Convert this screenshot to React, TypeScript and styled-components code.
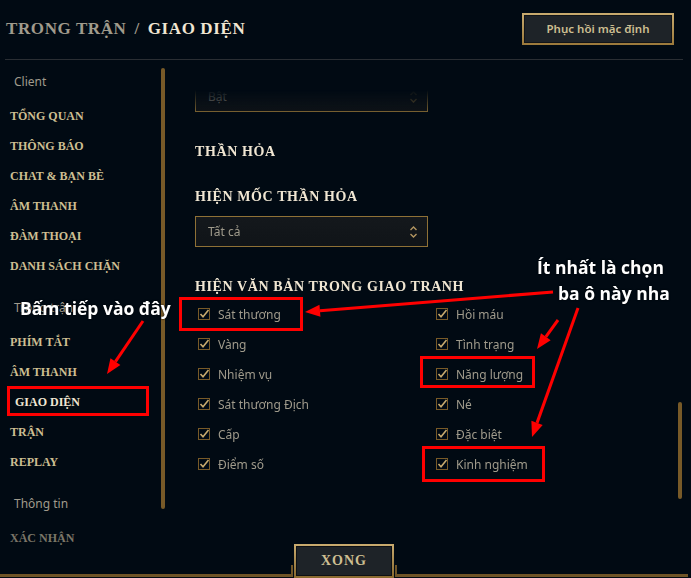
import React from "react";
import styled, { createGlobalStyle } from "styled-components";

const GlobalStyle = createGlobalStyle`
  html, body { margin: 0; padding: 0; background: #010a13; }
  body { font-family: "Noto Sans", sans-serif; }
  * { box-sizing: border-box; }
`;

const Screen = styled.div`
  position: relative;
  width: 691px;
  height: 578px;
  background: #010a13;
  display: flex;
  flex-direction: column;
  overflow: hidden;
`;

const Header = styled.header`
  height: 59px;
  display: flex;
  align-items: center;
  justify-content: space-between;
  padding: 0 17px 2px 6px;
`;

const Title = styled.h1`
  margin: 0;
  font-family: "Liberation Serif", serif;
  font-weight: 700;
  font-size: 17px;
  letter-spacing: 0.6px;
  color: #a09b8c;
  white-space: nowrap;
`;

const TitleSep = styled.span`
  margin: 0 8px;
`;

const TitleCurrent = styled.span`
  color: #f0e6d2;
`;

const ResetButton = styled.button`
  width: 152px;
  height: 32px;
  padding: 0;
  border: 2px solid transparent;
  border-image: linear-gradient(#c8aa6e, #9c7a3c) 1;
  background: #1e2328;
  box-shadow: inset 0 0 0 1px #111418;
  color: #cdbe91;
  font-family: "Noto Sans", sans-serif;
  font-weight: 600;
  font-size: 11.5px;
`;

const Divider = styled.div`
  height: 1px;
  margin: 0 8px 0 5px;
  background: #2a2e33;
`;

const Main = styled.main`
  flex: 1;
  min-height: 0;
  display: flex;
`;

const Sidebar = styled.aside`
  width: 165px;
  display: flex;
  padding-top: 8px;
`;

const Nav = styled.nav`
  width: 161px;
  display: flex;
  flex-direction: column;
  padding-left: 10px;
`;

const GroupLabel = styled.div`
  height: 28px;
  line-height: 28px;
  padding-left: 4px;
  margin-bottom: 5px;
  font-size: 12px;
  color: #a09b8c;
  &:not(:first-child) {
    margin-top: 13px;
  }
`;

const NavItem = styled.div<{ $active?: boolean; $disabled?: boolean }>`
  height: 30px;
  line-height: 30px;
  padding-left: ${(p) => (p.$active ? "5px" : "0")};
  font-family: "Liberation Serif", serif;
  font-weight: 700;
  font-size: 12px;
  letter-spacing: 0;
  white-space: nowrap;
  color: ${(p) => (p.$active ? "#f0e6d2" : p.$disabled ? "#7a7567" : "#cdbe91")};
`;

const ScrollThumb = styled.div<{ $height: number; $offset?: number }>`
  width: 4px;
  height: ${(p) => p.$height}px;
  margin-top: ${(p) => p.$offset ?? 0}px;
  border-radius: 2px;
  background: #785a28;
  flex-shrink: 0;
`;

const Content = styled.section`
  flex: 1;
  display: flex;
  flex-direction: column;
  padding: 21px 0 0 30px;
  -webkit-mask-image: linear-gradient(to bottom, transparent 30px, #000 56px);
  mask-image: linear-gradient(to bottom, transparent 30px, #000 56px);
`;

const RightTrack = styled.div`
  width: 13px;
  display: flex;
  flex-direction: column;
`;

const SectionTitle = styled.h2<{ $top: number; $bottom?: number }>`
  margin: ${(p) => p.$top}px 0 ${(p) => p.$bottom ?? 0}px;
  height: 20px;
  line-height: 20px;
  font-family: "Liberation Serif", serif;
  font-weight: 700;
  font-size: 14px;
  letter-spacing: 0.6px;
  color: #f0e6d2;
  white-space: nowrap;
`;

const Select = styled.div`
  width: 233px;
  height: 31px;
  display: flex;
  align-items: center;
  justify-content: space-between;
  padding: 0 9px 0 12px;
  border: 1px solid #8f7136;
  background: linear-gradient(#14181c, #101418);
  font-size: 12px;
  color: #a09b8c;
`;

const OptionGrid = styled.div`
  display: grid;
  grid-template-columns: 238px 238px;
  grid-template-rows: repeat(6, 30px);
  grid-auto-flow: column;
  padding-left: 2px;
`;

const Option = styled.label`
  display: flex;
  align-items: center;
  gap: 7px;
  font-size: 12px;
  color: #a09b8c;
  white-space: nowrap;
`;

const Footer = styled.footer`
  height: 34px;
  display: flex;
  align-items: flex-end;
  padding-right: 3px;
`;

const FooterRule = styled.div`
  flex: 1;
  height: 3px;
  background: #6f5427;
  margin-bottom: 1px;
`;

const DoneFrame = styled.div`
  position: relative;
  display: flex;
  align-items: flex-end;
  padding: 0 3px;
  &::before,
  &::after {
    content: "";
    position: absolute;
    bottom: 1px;
    width: 2px;
    height: 12px;
    background: #6f5427;
  }
  &::before { left: 0; }
  &::after { right: 0; }
`;

const DoneButton = styled.button`
  width: 100px;
  height: 34px;
  padding: 0;
  border: 2px solid transparent;
  border-image: linear-gradient(#c8aa6e, #8a6a30) 1;
  background: #1e2328;
  box-shadow: inset 0 0 0 1px #0d1014;
  font-family: "Liberation Serif", serif;
  font-weight: 700;
  font-size: 14px;
  letter-spacing: 1px;
  color: #cdbe91;
`;

/* red markup drawn on top of the settings page */
const Markup = styled.div`
  position: absolute;
  inset: 0;
  pointer-events: none;
`;

const MarkupSvg = styled.svg`
  position: absolute;
  left: 0;
  top: 0;
`;

const Note = styled.div<{ $x: number; $y: number }>`
  position: absolute;
  left: ${(p) => p.$x}px;
  top: ${(p) => p.$y}px;
  font-family: "Open Sans", sans-serif;
  font-weight: 700;
  font-size: 17.5px;
  line-height: 22px;
  color: #ffffff;
  white-space: nowrap;
  text-shadow: 0 0 2px rgba(0, 0, 0, 0.9);
`;

const Chevrons = ({ faded }: { faded?: boolean }) => (
  <svg width="9" height="14" viewBox="0 0 9 14">
    <path
      d="M1.5 5 L4.5 2 L7.5 5 M1.5 9 L4.5 12 L7.5 9"
      fill="none"
      stroke={faded ? "#6d5a34" : "#b39660"}
      strokeWidth="1.4"
    />
  </svg>
);

const CheckBox = () => (
  <svg width="14" height="14" viewBox="0 0 14 14" style={{ flexShrink: 0 }}>
    <rect x="1.5" y="1.5" width="11" height="11" fill="none" stroke="#785a28" strokeWidth="1" />
    <path d="M3.5 7 L6 9.8 L11.5 3" fill="none" stroke="#c8aa6e" strokeWidth="1.6" />
  </svg>
);

const Arrow = ({ x1, y1, x2, y2 }: { x1: number; y1: number; x2: number; y2: number }) => {
  const dx = x2 - x1;
  const dy = y2 - y1;
  const len = Math.hypot(dx, dy);
  const ux = dx / len;
  const uy = dy / len;
  const bx = x2 - ux * 15;
  const by = y2 - uy * 15;
  const px = -uy * 6;
  const py = ux * 6;
  return (
    <g>
      <line x1={x1} y1={y1} x2={bx} y2={by} stroke="#ff0000" strokeWidth="3" />
      <polygon points={`${x2},${y2} ${bx + px},${by + py} ${bx - px},${by - py}`} fill="#ff0000" />
    </g>
  );
};

const leftOptions = ["Sát thương", "Vàng", "Nhiệm vụ", "Sát thương Địch", "Cấp", "Điểm số"];
const rightOptions = ["Hồi máu", "Tình trạng", "Năng lượng", "Né", "Đặc biệt", "Kinh nghiệm"];

export default function App() {
  return (
    <Screen>
      <GlobalStyle />
      <Header>
        <Title>
          TRONG TRẬN<TitleSep>/</TitleSep>
          <TitleCurrent>GIAO DIỆN</TitleCurrent>
        </Title>
        <ResetButton>Phục hồi mặc định</ResetButton>
      </Header>
      <Divider />
      <Main>
        <Sidebar>
          <Nav>
            <GroupLabel>Client</GroupLabel>
            <NavItem>TỔNG QUAN</NavItem>
            <NavItem>THÔNG BÁO</NavItem>
            <NavItem>CHAT &amp; BẠN BÈ</NavItem>
            <NavItem>ÂM THANH</NavItem>
            <NavItem>ĐÀM THOẠI</NavItem>
            <NavItem>DANH SÁCH CHẶN</NavItem>
            <GroupLabel>Trong trận</GroupLabel>
            <NavItem>PHÍM TẮT</NavItem>
            <NavItem>ÂM THANH</NavItem>
            <NavItem $active>GIAO DIỆN</NavItem>
            <NavItem>TRẬN</NavItem>
            <NavItem>REPLAY</NavItem>
            <GroupLabel>Thông tin</GroupLabel>
            <NavItem $disabled>XÁC NHẬN</NavItem>
          </Nav>
          <ScrollThumb $height={441} />
        </Sidebar>
        <Content>
          <Select>
            <span>Bật</span>
            <Chevrons faded />
          </Select>
          <SectionTitle $top={30}>THẦN HỎA</SectionTitle>
          <SectionTitle $top={25} $bottom={9}>HIỆN MỐC THẦN HỎA</SectionTitle>
          <Select>
            <span>Tất cả</span>
            <Chevrons />
          </Select>
          <SectionTitle $top={30} $bottom={2}>HIỆN VĂN BẢN TRONG GIAO TRANH</SectionTitle>
          <OptionGrid>
            {[...leftOptions, ...rightOptions].map((label) => (
              <Option key={label}>
                <CheckBox />
                {label}
              </Option>
            ))}
          </OptionGrid>
        </Content>
        <RightTrack>
          <ScrollThumb $height={97} $offset={342} />
        </RightTrack>
      </Main>
      <Footer>
        <FooterRule />
        <DoneFrame>
          <DoneButton>XONG</DoneButton>
        </DoneFrame>
        <FooterRule />
      </Footer>

      <Markup>
        <MarkupSvg width="691" height="578" viewBox="0 0 691 578">
          <g fill="none" stroke="#ff0000" strokeWidth="3">
            <rect x="180.5" y="298.5" width="121" height="31" />
            <rect x="8.5" y="387.5" width="139" height="27" />
            <rect x="421.5" y="357.5" width="112" height="29" />
            <rect x="423.5" y="447.5" width="120" height="33" />
          </g>
          <Arrow x1={553} y1={292} x2={305} y2={312} />
          <Arrow x1={143} y1={321} x2={107} y2={374} />
          <Arrow x1={558} y1={320} x2={537} y2={349} />
          <Arrow x1={578} y1={308} x2={532} y2={437} />
        </MarkupSvg>
        <Note $x={20} $y={297}>Bấm tiếp vào đây</Note>
        <Note $x={537} $y={256}>Ít nhất là chọn</Note>
        <Note $x={558} $y={282}>ba ô này nha</Note>
      </Markup>
    </Screen>
  );
}
